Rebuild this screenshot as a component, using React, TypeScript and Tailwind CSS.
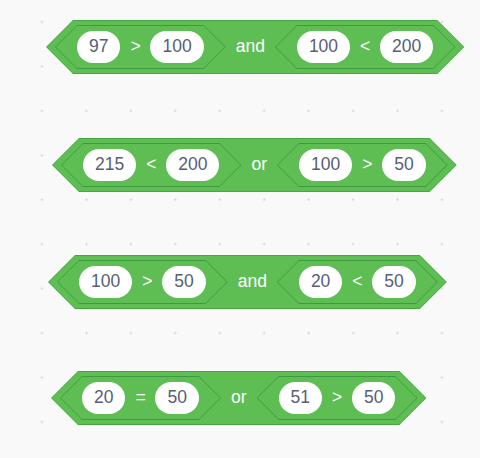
import React from "react";

const FONT = "font-['Liberation_Sans',Arial,sans-serif]";

function Oval({ v }: { v: string }) {
  return (
    <div className="h-8 min-w-[43px] px-[12px] rounded-full bg-white flex items-center justify-center text-[17.5px] leading-none text-[#575e75]">
      {v}
    </div>
  );
}

function Inner({ a, op, b }: { a: string; op: string; b: string }) {
  return (
    <div className="relative h-[44px] flex items-center">
      <div className="absolute inset-0 bg-[#3f9a3f] [clip-path:polygon(22px_0,calc(100%_-_22px)_0,100%_50%,calc(100%_-_22px)_100%,22px_100%,0_50%)]" />
      <div className="absolute inset-[1px] bg-[#5ebe54] [clip-path:polygon(21px_0,calc(100%_-_21px)_0,100%_50%,calc(100%_-_21px)_100%,21px_100%,0_50%)]" />
      <div className="relative flex items-center gap-[10px] px-[22px]">
        <Oval v={a} />
        <span className="text-white text-[17.5px] leading-none w-[10px] text-center">{op}</span>
        <Oval v={b} />
      </div>
    </div>
  );
}

function Block({
  left,
  right,
  label,
  className,
}: {
  left: [string, string, string];
  right: [string, string, string];
  label: string;
  className: string;
}) {
  return (
    <div className={`relative h-[54px] flex items-center ${className}`}>
      <div className="absolute inset-0 bg-[#45a845] [clip-path:polygon(27px_0,calc(100%_-_27px)_0,100%_50%,calc(100%_-_27px)_100%,27px_100%,0_50%)]" />
      <div className="absolute inset-[1px] bg-[#5ebe54] [clip-path:polygon(26px_0,calc(100%_-_26px)_0,100%_50%,calc(100%_-_26px)_100%,26px_100%,0_50%)]" />
      <div className="relative flex items-center gap-[10px] px-[9px]">
        <Inner a={left[0]} op={left[1]} b={left[2]} />
        <span className="text-white text-[17.5px] leading-none">{label}</span>
        <Inner a={right[0]} op={right[1]} b={right[2]} />
      </div>
    </div>
  );
}

export default function App() {
  return (
    <div
      className={`w-[480px] h-[458px] overflow-hidden bg-[#f9f9f9] bg-[radial-gradient(circle,#d6d6d6_0.9px,transparent_1.4px)] bg-[length:44.44px_44.44px] bg-[position:19.78px_-0.22px] flex flex-col items-start pt-[20px] ${FONT}`}
    >
      <Block className="ml-[46px]" left={["97", ">", "100"]} label="and" right={["100", "<", "200"]} />
      <Block className="ml-[52px] mt-[64px]" left={["215", "<", "200"]} label="or" right={["100", ">", "50"]} />
      <Block className="ml-[48px] mt-[63px]" left={["100", ">", "50"]} label="and" right={["20", "<", "50"]} />
      <Block className="ml-[51px] mt-[62px]" left={["20", "=", "50"]} label="or" right={["51", ">", "50"]} />
    </div>
  );
}
